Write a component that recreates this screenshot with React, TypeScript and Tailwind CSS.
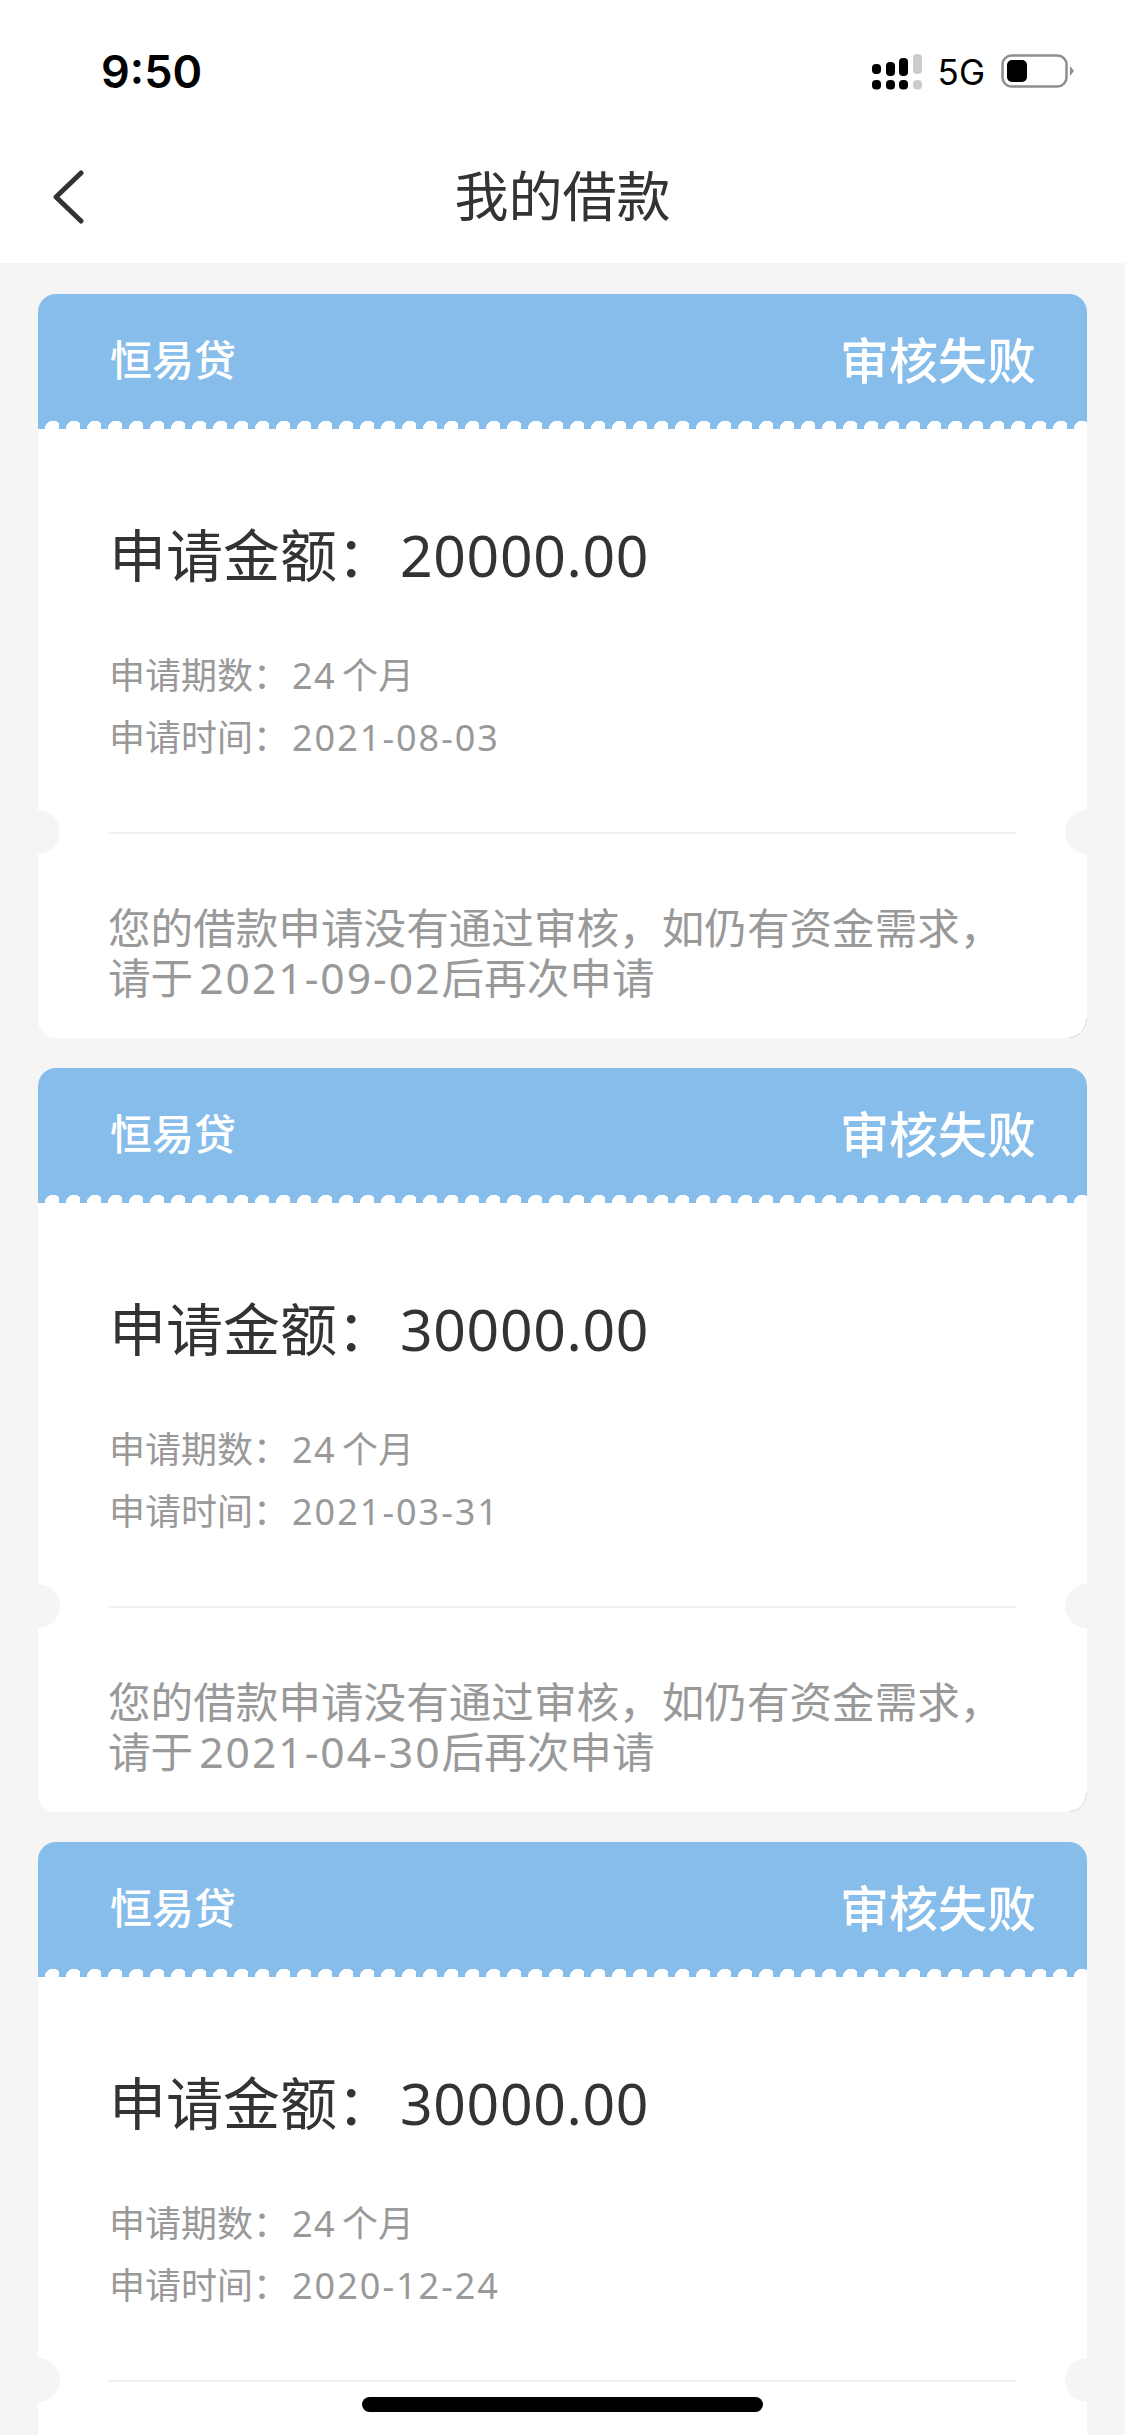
import React from 'react';

const font = 'font-["Noto_Sans","Noto_Sans_CJK_SC",sans-serif]';

const loans = [
  { amount: '20000.00', date: '2021-08-03', retry: '2021-09-02' },
  { amount: '30000.00', date: '2021-03-31', retry: '2021-04-30' },
  { amount: '30000.00', date: '2020-12-24' },
];

function StatusIcons() {
  return (
    <div className="flex items-center">
      {/* signal */}
      <svg width="50" height="36" viewBox="0 0 50 36" className="mr-[16px]">
        <rect x="0" y="10" width="9" height="10" rx="4" fill="#000" />
        <rect x="14" y="8" width="9" height="14" rx="4" fill="#000" />
        <rect x="27" y="4" width="9" height="18" rx="4" fill="#000" />
        <rect x="41" y="0" width="9" height="20" rx="4" fill="#ccc" />
        <rect x="0" y="26" width="9" height="9.5" rx="4" fill="#000" />
        <rect x="14" y="26" width="9" height="9.5" rx="4" fill="#000" />
        <rect x="27" y="26" width="9" height="9.5" rx="4" fill="#000" />
        <rect x="41" y="26" width="9" height="9.5" rx="4" fill="#ccc" />
      </svg>
      <span className='font-["Inter",sans-serif] text-[35px] leading-[36px] text-black'>5G</span>
      {/* battery */}
      <svg width="74" height="36" viewBox="0 0 74 36" className="ml-[16px]">
        <rect x="1.5" y="1.5" width="64" height="31" rx="9" fill="#fff" stroke="#8e8e8e" strokeWidth="2.5" />
        <rect x="6" y="6" width="20" height="22" rx="5" fill="#000" />
        <path d="M69 12 L73 17 L69 22 Z" fill="#8e8e8e" />
      </svg>
    </div>
  );
}

function LoanCard({ amount, date, retry }: { amount: string; date: string; retry?: string }) {
  return (
    <div className="relative shrink-0 overflow-hidden rounded-[18px] bg-white">
      <div className="bg-[#87bdea]">
        <div className="flex h-[127px] items-center justify-between pl-[72px] pr-[51px] pt-[5px] font-medium text-white">
          <span className="text-[42px] leading-none">恒易贷</span>
          <span className="text-[49px] leading-none">审核失败</span>
        </div>
        <div className="h-[8px] bg-[radial-gradient(circle_at_15px_8px,#ffffff_8px,transparent_8.5px)] bg-[length:21px_8px]" />
      </div>

      <div className="h-[403px] pl-[71px] pr-[71px]">
        <div className="pt-[83px] text-[57px] leading-[86px] text-[#333333]">
          申请金额：<span className="ml-[6px] tracking-[0.7px]">{amount}</span>
        </div>
        <div className="mt-[47px] text-[36px] leading-[62px] text-[#999999]">
          <div>
            申请期数：<span className="ml-[3px] tracking-[1.4px]">24</span>
            <span className="ml-[6px]">个月</span>
          </div>
          <div>
            申请时间：<span className="ml-[3px] tracking-[2px]">{date}</span>
          </div>
        </div>
      </div>

      <div className="mx-[71px] h-[2px] bg-[#f0f0f0]" />

      <div className="h-[204px] pl-[70px] pt-[68px] text-[42.6px] leading-[50px] text-[#999999]">
        {retry && (
          <>
            <div>您的借款申请没有通过审核，如仍有资金需求，</div>
            <div>
              请于<span className="ml-[6px] tracking-[2px]">{retry}</span>后再次申请
            </div>
          </>
        )}
      </div>

      {/* ticket notches */}
      <div className="absolute left-[-22px] top-[516px] h-[44px] w-[44px] rounded-full bg-[#f5f5f5]" />
      <div className="absolute right-[-22px] top-[516px] h-[44px] w-[44px] rounded-full bg-[#f5f5f5]" />

      {/* faint edge on the bottom right corner */}
      <svg width="20" height="20" viewBox="0 0 20 20" className="absolute bottom-0 right-0">
        <path d="M19.5 1 C19.5 11 12 19.5 2 19.5" fill="none" stroke="#d4d4d4" strokeWidth="1" />
      </svg>
    </div>
  );
}

export default function App() {
  return (
    <div className={`relative flex h-[2435px] w-[1125px] flex-col overflow-hidden bg-[#f5f5f5] ${font}`}>
      <div className="shrink-0 bg-white">
        <div className="flex h-[120px] items-center justify-between pl-[101px] pr-[50px] pt-[23px]">
          <span className='font-["Inter",sans-serif] text-[45px] font-semibold leading-none text-black'>9:50</span>
          <StatusIcons />
        </div>
        <div className="relative flex h-[143px] items-center justify-center pt-[8px]">
          <svg width="36" height="54" viewBox="0 0 36 54" className="absolute left-[50px] top-[50px]">
            <path d="M31 3 L6 27 L31 51" fill="none" stroke="#333333" strokeWidth="5" strokeLinecap="round" strokeLinejoin="round" />
          </svg>
          <span className="text-[54px] leading-none text-[#333333]">我的借款</span>
        </div>
      </div>

      <div className="flex flex-col gap-[30px] px-[38px] pt-[31px]">
        {loans.map((l, i) => (
          <LoanCard key={i} {...l} />
        ))}
      </div>

      {/* home indicator */}
      <div className="absolute bottom-[23px] left-[362px] h-[15px] w-[401px] rounded-full bg-black" />
    </div>
  );
}
